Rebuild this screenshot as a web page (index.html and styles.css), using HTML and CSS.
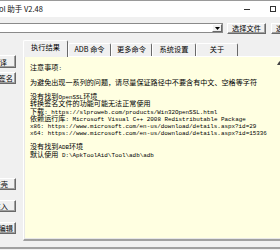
FILE: index.html
```html
<!DOCTYPE html>
<html lang="zh">
<head>
<meta charset="utf-8">
<title>ApkTool 助手</title>
<link rel="stylesheet" href="styles.css">
</head>
<body>
<div class="titlebar">
  <span class="title">ol 助手 V2.48</span>
  <span class="cap"><i class="min"></i></span>
  <span class="cap"><i class="max"></i></span>
</div>
<div class="toolbar">
  <div class="combo">
    <span class="combo-btn"><svg width="5" height="3" viewBox="0 0 5 3"><path d="M0 0H5L2.5 3Z" fill="#000"/></svg></span>
  </div>
  <button class="btn">选择文件</button>
  <button class="btn">选择目录</button>
</div>
<div class="main">
  <div class="side">
    <button class="sbtn s1">反编译</button>
    <button class="sbtn s2">重新签名</button>
    <button class="sbtn s3">查壳</button>
    <button class="sbtn s4">注入</button>
    <button class="sbtn s5">编辑</button>
  </div>
  <div class="tabs">
    <div class="tabbar">
      <div class="tab active w1">执行结果</div>
      <div class="tab w2">ADB 命令</div>
      <div class="tab w3">更多命令</div>
      <div class="tab w4">系统设置</div>
      <div class="tab w5">关于</div>
    </div>
    <div class="page">
      <div class="log">
        <div class="lines">
          <div class="ln">注意事项<span class="en">:</span></div>
          <div class="ln"></div>
          <div class="ln">为避免出现一系列的问题，请尽量保证路径中不要含有中文、空格等字符</div>
          <div class="ln"></div>
          <div class="ln">没有找到<span class="en">OpenSSL</span>环境</div>
          <div class="ln">转换签名文件的功能可能无法正常使用</div>
          <div class="ln">下载<span class="en">: https://slproweb.com/products/Win32OpenSSL.html</span></div>
          <div class="ln">依赖运行库<span class="en">: Microsoft Visual C++ 2008 Redistributable Package</span></div>
          <div class="ln"><span class="en">x86: https://www.microsoft.com/en-us/download/details.aspx?id=29</span></div>
          <div class="ln"><span class="en">x64: https://www.microsoft.com/en-us/download/details.aspx?id=15336</span></div>
          <div class="ln"></div>
          <div class="ln">没有找到<span class="en">ADB</span>环境</div>
          <div class="ln">默认使用<span class="en"> D:\ApkToolAid\Tool\adb\adb</span></div>
        </div>
        <div class="vscroll"><svg width="5" height="4" viewBox="0 0 5 4"><path d="M0 4H5L2.5 0Z" fill="#444"/></svg></div>
      </div>
    </div>
  </div>
</div>
<div class="status"></div>
</body>
</html>
```

FILE: styles.css
```css
* { box-sizing: border-box; }
html, body { margin: 0; padding: 0; }
body {
  width: 280px;
  height: 250px;
  overflow: hidden;
  background: #f0f0f0;
  font-family: "Noto Sans CJK SC", "Liberation Sans", sans-serif;
  font-size: 7.2px;
  color: #000;
}

.titlebar {
  width: 286px;
  height: 17px;
  background: #fff;
  border-top: 1px solid #9a9a9a;
  display: flex;
  align-items: center;
  white-space: nowrap;
}
.title {
  flex: 1;
  margin-left: -1px;
  font-size: 7.5px;
  line-height: 1;
  color: #111;
}
.cap {
  flex: none;
  width: 26px;
  height: 16px;
  display: flex;
  align-items: center;
  justify-content: center;
}
.min { display: block; width: 6px; height: 1px; background: #333; }
.max { display: block; width: 6px; height: 6px; border: 1px solid #333; }

.toolbar {
  width: 330px;
  height: 23px;
  display: flex;
  align-items: flex-start;
  padding-top: 6px;
}
.combo {
  flex: none;
  width: 223px;
  height: 10px;
  background: #fff;
  border: 1px solid #8a8a8a;
  border-left: none;
  display: flex;
  justify-content: flex-end;
  align-items: center;
}
.combo-btn {
  width: 10px;
  height: 8px;
  background: #f0f0f0;
  border: 1px solid;
  border-color: #fff #696969 #696969 #fff;
  display: flex;
  align-items: center;
  justify-content: center;
}
.combo-btn svg { display: block; }

.btn, .sbtn {
  font-family: inherit;
  font-size: 7.2px;
  color: #000;
  background: #f0f0f0;
  border: 1px solid;
  border-color: #fff #696969 #696969 #fff;
  box-shadow: inset -1px -1px #a0a0a0;
  padding: 0;
  line-height: 9px;
  white-space: nowrap;
}
.btn {
  flex: none;
  width: 39px;
  height: 11px;
  margin-left: 4px;
}
.btn + .btn { margin-left: 5px; }

.main {
  display: flex;
  height: 201px;
}
.side {
  flex: none;
  width: 16px;
  margin-right: 7px;
  display: flex;
  flex-direction: column;
}
.sbtn {
  width: 46px;
  margin-left: -30px;
  height: 12px;
  text-align: right;
  line-height: 10px;
}
.s1 { margin-top: 15px; height: 13px; padding-right: 8px; }
.s2 { margin-top: 4px; padding-right: 2px; }
.s3 { margin-top: 94px; padding-right: 7px; }
.s4 { margin-top: 10px; padding-right: 7px; }
.s5 { margin-top: 10px; padding-right: 2px; }

.tabs {
  flex: none;
  width: 270px;
  display: flex;
  flex-direction: column;
}
.tabbar {
  height: 16px;
  display: flex;
  align-items: flex-end;
}
.tab {
  flex: none;
  height: 13px;
  border: 1px solid;
  border-color: #fff #696969 transparent #fff;
  border-bottom: none;
  border-radius: 2px 2px 0 0;
  display: flex;
  align-items: center;
  justify-content: center;
  white-space: nowrap;
  line-height: 1;
}
.tab.active {
  height: 17px;
  margin-bottom: -1px;
  position: relative;
  z-index: 1;
  background: #f0f0f0;
  padding-bottom: 2px;
}
.w1 { width: 45px; }
.w2 { width: 43px; }
.w3 { width: 41px; }
.w4 { width: 44px; }
.w5 { width: 42px; }

.page {
  height: 185px;
  border-top: 1px solid #fff;
  border-left: 1px solid #fff;
  border-bottom: 2px solid #a0a0a0;
  padding: 0 0 1px 1px;
  background: #e8e8e8;
}
.log {
  height: 181px;
  background: #ffffe1;
  display: flex;
}
.lines {
  flex: 1;
  padding: 7.4px 0 0 5px;
}
.ln {
  height: 7.2px;
  line-height: 7.2px;
  font-size: 7.1px;
  white-space: pre;
  color: #000;
}
.en {
  font-family: "Liberation Mono", monospace;
  font-size: 5.9px;
}
.vscroll {
  flex: none;
  width: 17px;
  padding: 4px 0 0 1px;
}
.vscroll svg { display: block; }

.status {
  margin-top: 6px;
  border-top: 2px solid #a0a0a0;
  height: 3px;
}
```
